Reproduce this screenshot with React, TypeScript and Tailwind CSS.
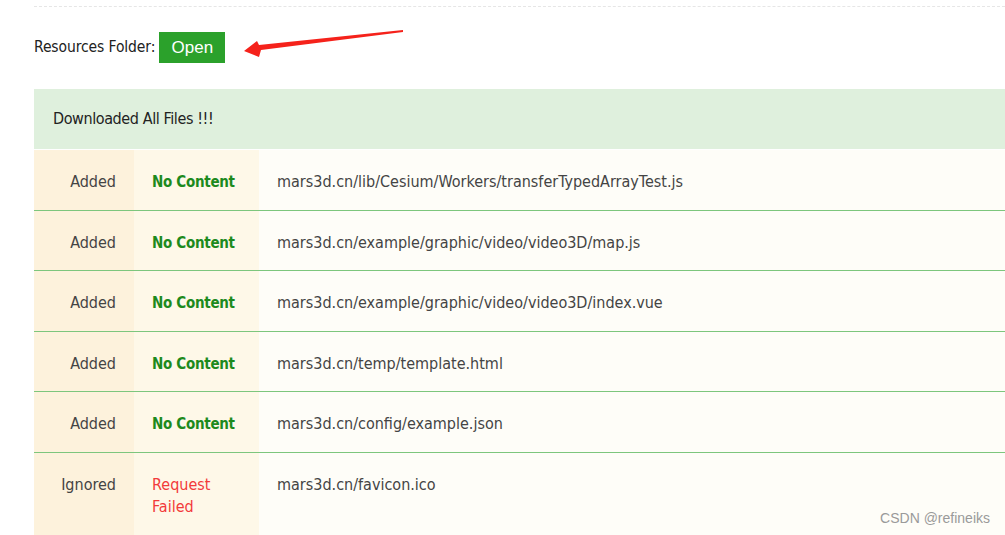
import React from 'react';

const rows = [
  { state: 'Added', result: 'No Content', ok: true, path: 'mars3d.cn/lib/Cesium/Workers/transferTypedArrayTest.js' },
  { state: 'Added', result: 'No Content', ok: true, path: 'mars3d.cn/example/graphic/video/video3D/map.js' },
  { state: 'Added', result: 'No Content', ok: true, path: 'mars3d.cn/example/graphic/video/video3D/index.vue' },
  { state: 'Added', result: 'No Content', ok: true, path: 'mars3d.cn/temp/template.html' },
  { state: 'Added', result: 'No Content', ok: true, path: 'mars3d.cn/config/example.json' },
  { state: 'Ignored', result: 'Request Failed', ok: false, path: 'mars3d.cn/favicon.ico' },
];

const font = { fontFamily: '"Liberation Sans Narrow", "DejaVu Sans Condensed", sans-serif' };

const App = () => {
  return (
    <div className="relative w-[1005px] h-[535px] overflow-hidden bg-white text-[#333]" style={font}>
      {/* top divider */}
      <div className="ml-[34px] pt-[6px] border-b border-dashed border-[#e6e6e6]"></div>

      {/* resources folder */}
      <div className="ml-[34px] mt-[25px] h-[31px] flex items-center gap-[4px]">
        <span className="text-[15.5px] text-[#222] tracking-[-0.1px]">Resources Folder:</span>
        <button
          className="h-[31px] w-[66px] bg-[#2ba12b] text-white text-[17px]"
          style={{ fontFamily: '"Liberation Sans", Arial, sans-serif' }}
        >
          Open
        </button>
      </div>

      {/* red arrow */}
      <svg className="absolute left-0 top-0" width="420" height="70">
        <polygon
          points="244,51 257,41 259,45 403,30 403,32 261,50 259,57"
          fill="#f5221b"
        />
      </svg>

      {/* result table */}
      <div className="ml-[34px] mt-[26px] w-[980px] text-[16px]">
        <div className="h-[61px] flex items-center pl-[19px] bg-[#dff0dd] border-b border-white text-[#222] tracking-[-0.4px]">
          Downloaded All Files !!!
        </div>
        {rows.map((r, i) => (
          <div
            key={i}
            className={`flex leading-[22px] ${i < rows.length - 1 ? 'border-b border-[#7dc67d]' : ''}`}
          >
            <div className="w-[100px] shrink-0 bg-[#fdf2dc] pt-[21px] pb-[16.5px] pr-[18px] text-right text-[#444]">
              {r.state}
            </div>
            <div
              className={`w-[125px] shrink-0 bg-[#fef8e8] pt-[21px] pb-[16.5px] pl-[18px] pr-[20px] ${
                r.ok ? 'font-bold text-[15px] text-[#1d8a1d] whitespace-nowrap tracking-[-0.3px]' : 'text-[#f23a3a] pb-[30px]'
              }`}
            >
              {r.result}
            </div>
            <div className="flex-1 bg-[#fefdf8] pt-[21px] pb-[16.5px] pl-[18px] text-[#444]">{r.path}</div>
          </div>
        ))}
      </div>

      {/* watermark */}
      <div
        className="absolute right-[15px] bottom-[6px] text-[14px] text-[#9a9a9a]"
        style={{ fontFamily: '"Liberation Sans", Arial, sans-serif' }}
      >
        CSDN @refineiks
      </div>
    </div>
  );
};

export default App;
